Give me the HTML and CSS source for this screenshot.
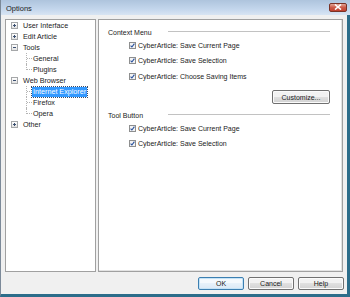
FILE: index.html
```html
<!DOCTYPE html>
<html lang="en">
<head>
  <meta charset="UTF-8" />
  <title>Options</title>
  <link rel="stylesheet" href="styles.css">
</head>
<body>
<div class="window">
  <div class="titlebar">
    <span class="title">Options</span>
    <span class="close">
      <svg width="8" height="6" viewBox="0 0 8 6"><path d="M1 0.5 L7 5.5 M7 0.5 L1 5.5" stroke="#fff" stroke-width="1.6"/></svg>
    </span>
  </div>

  <div class="frame">
    <div class="panes">
      <ul class="tree">
        <li class="node"><span class="expander plus"></span><span class="label">User Interface</span></li>
        <li class="node"><span class="expander plus"></span><span class="label">Edit Article</span></li>
        <li class="node"><span class="expander"></span><span class="label">Tools</span></li>
        <li class="leaf"><span class="branch"></span><span class="label">General</span></li>
        <li class="leaf last"><span class="branch"></span><span class="label">Plugins</span></li>
        <li class="node"><span class="expander"></span><span class="label">Web Browser</span></li>
        <li class="leaf"><span class="branch"></span><span class="label selected">Internet Explorer</span></li>
        <li class="leaf"><span class="branch"></span><span class="label">Firefox</span></li>
        <li class="leaf last"><span class="branch"></span><span class="label">Opera</span></li>
        <li class="node"><span class="expander plus"></span><span class="label">Other</span></li>
      </ul>

      <div class="page">
        <div class="group-head"><span>Context Menu</span><span class="rule"></span></div>
        <ul class="checks">
          <li><span class="check"></span>CyberArticle: Save Current Page</li>
          <li><span class="check"></span>CyberArticle: Save Selection</li>
          <li class="spaced"><span class="check"></span>CyberArticle: Choose Saving Items</li>
        </ul>
        <div class="actions">
          <button class="btn customize">Customize...</button>
        </div>

        <div class="group-head second"><span>Tool Button</span><span class="rule"></span></div>
        <ul class="checks">
          <li><span class="check"></span>CyberArticle: Save Current Page</li>
          <li><span class="check"></span>CyberArticle: Save Selection</li>
        </ul>
      </div>
    </div>

    <div class="buttons">
      <button class="btn default">OK</button>
      <button class="btn">Cancel</button>
      <button class="btn">Help</button>
    </div>
  </div>
</div>
</body>
</html>
```

FILE: styles.css
```css
html, body {
  margin: 0;
  padding: 0;
  background: #f0f0f0;
  font-family: "Liberation Sans", Arial, sans-serif;
  color: #1a1a1a;
}

.window {
  width: 350px;
  height: 297px;
  display: flex;
  flex-direction: column;
  overflow: hidden;
}

.titlebar {
  height: 15px;
  flex: none;
  display: flex;
  align-items: center;
  justify-content: space-between;
  padding: 0 3px 0 5px;
  background: linear-gradient(#aec4dd, #c3d6ec 60%, #d8e5f3);
  border-left: 1px solid #7c8a99;
  box-sizing: border-box;
}

.title {
  font-size: 7.5px;
  margin-top: 1px;
}

.close {
  width: 18px;
  height: 9px;
  margin-top: -1px;
  box-sizing: border-box;
  display: flex;
  align-items: center;
  justify-content: center;
  border: 1px solid #7a3226;
  border-radius: 2px;
  background: linear-gradient(#e2a597, #cc5a48 50%, #c0402e);
}

.frame {
  flex: 1;
  display: flex;
  flex-direction: column;
  padding: 4px 3px 4px 4px;
  border-left: 1px solid #7c8a99;
  border-right: 3px solid #2c6d8a;
  border-bottom: 3px solid #2c6d8a;
  background: #f0f0f0;
}

.panes {
  display: flex;
  gap: 2px;
  height: 253px;
  margin-right: 1px;
}

/* tree */

.tree {
  list-style: none;
  margin: 0;
  padding: 0;
  width: 91px;
  box-sizing: border-box;
  border: 1px solid #a0a0a0;
  background: #fff;
  font-size: 7.2px;
}

.tree li {
  display: flex;
  align-items: center;
  height: 11px;
  white-space: nowrap;
}

.tree li.node {
  padding-left: 5px;
}

.tree li.leaf {
  padding-left: 20px;
}

.expander {
  position: relative;
  width: 7px;
  height: 7px;
  box-sizing: border-box;
  margin-right: 4px;
  border: 1px solid #a5a7a9;
  background: linear-gradient(#ffffff, #e2e2e2);
}

.expander::before {
  content: "";
  position: absolute;
  left: 1px;
  top: 2px;
  width: 3px;
  height: 1px;
  background: #3b4f70;
}

.expander.plus::after {
  content: "";
  position: absolute;
  left: 2px;
  top: 1px;
  width: 1px;
  height: 3px;
  background: #3b4f70;
}

.branch {
  position: relative;
  width: 6px;
  height: 11px;
}

.branch::before {
  content: "";
  position: absolute;
  left: 0;
  top: 0;
  height: 11px;
  border-left: 1px dotted #b4b4b4;
}

.leaf.last .branch::before {
  height: 6px;
}

.branch::after {
  content: "";
  position: absolute;
  left: 1px;
  top: 5px;
  width: 5px;
  border-top: 1px dotted #b4b4b4;
}

.label {
  line-height: 10px;
  padding: 0 1px;
}

.label.selected {
  background: #3399ff;
  color: #ffffff;
  outline: 1px dotted #3a4a66;
  padding: 0 1px;
}

/* page */

.page {
  flex: 1;
  box-sizing: border-box;
  border: 1px solid #a0a0a0;
  box-shadow: inset -1px -1px 0 #e3e3e3;
  background: #fff;
  padding: 7px 12px 0 9px;
  font-size: 7px;
}

.group-head {
  display: grid;
  grid-template-columns: 60px 1fr;
  align-items: center;
  height: 10px;
}

.group-head.second {
  margin-top: 6px;
}

.rule {
  height: 1px;
  margin-top: -1px;
  background: #c2c2c2;
}

.checks {
  list-style: none;
  margin: 1px 0 0;
  padding: 0 0 0 21px;
}

.checks li {
  display: flex;
  align-items: center;
  height: 15px;
  white-space: nowrap;
}

.checks li.spaced {
  height: 16px;
  padding-top: 1px;
  box-sizing: border-box;
}

.check {
  width: 7px;
  height: 7px;
  box-sizing: border-box;
  margin-right: 2px;
  border: 1px solid #8e8f8f;
  background: #f4f4f4 url("data:image/svg+xml;utf8,<svg xmlns='http://www.w3.org/2000/svg' width='5' height='5' viewBox='0 0 5 5'><path d='M0.6 2.6 L1.9 4 L4.4 0.6' fill='none' stroke='%23264f9c' stroke-width='1.1'/></svg>") center / 5px 5px no-repeat;
}

.actions {
  display: flex;
  justify-content: flex-end;
  margin-top: 6px;
}

/* buttons */

.btn {
  height: 13px;
  padding: 0;
  font-family: "Liberation Sans", Arial, sans-serif;
  font-size: 7px;
  color: #1a1a1a;
  border: 1px solid #707070;
  border-radius: 2px;
  background: linear-gradient(#f2f2f2 50%, #e0e0e0 50%, #d2d2d2);
  box-shadow: inset 0 0 0 1px #fbfbfb;
}

.customize {
  width: 58px;
  height: 14px;
}

.buttons {
  display: flex;
  justify-content: flex-end;
  gap: 4px;
  margin-top: 5px;
}

.buttons .btn {
  width: 46px;
}

.btn.default {
  border-color: #3c7fb1;
  background: linear-gradient(#f4f9fd 50%, #e6f1fa 50%, #dbe9f5);
  box-shadow: inset 0 0 0 1px #c5e3f7;
}
```
